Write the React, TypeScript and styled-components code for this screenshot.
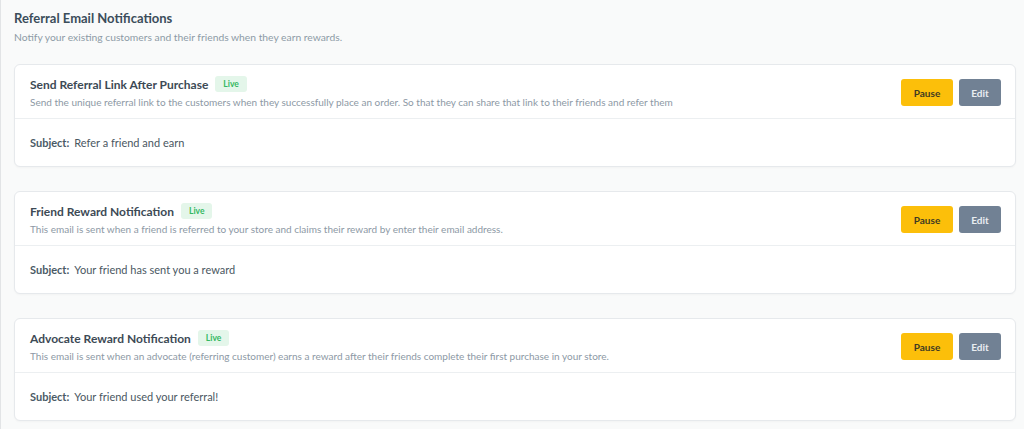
import React from "react";
import styled, { createGlobalStyle } from "styled-components";

const Global = createGlobalStyle`
  html, body { margin: 0; padding: 0; background: #f9fafa; }
  body { font-family: Lato, "Open Sans", sans-serif; }
  * { box-sizing: border-box; }
`;

const Page = styled.div`
  min-height: 429px;
  border-left: 1px solid #e2e4e6;
  padding: 9px 8px 0 13px;
  display: flex;
  flex-direction: column;
`;

const Heading = styled.h2`
  margin: 0;
  font-size: 13px;
  line-height: 18px;
  font-weight: 700;
  color: #3b4d5a;
`;

const SubHeading = styled.p`
  margin: 3px 0 0;
  font-size: 10.3px;
  line-height: 14px;
  color: #8d9aa6;
`;

const List = styled.div`
  margin-top: 20px;
  display: flex;
  flex-direction: column;
  gap: 24px;
`;

const Card = styled.section`
  background: #fff;
  border: 1px solid #e6e9ec;
  border-radius: 6px;
  box-shadow: 0 1px 2px rgba(0, 0, 0, 0.03);
`;

const CardHeader = styled.div`
  display: flex;
  align-items: center;
  justify-content: space-between;
  padding: 11px 14px 9px 15px;
  border-bottom: 1px solid #eceff1;
`;

const HeaderText = styled.div`
  display: flex;
  flex-direction: column;
  gap: 3px;
`;

const TitleRow = styled.div`
  display: flex;
  align-items: center;
  gap: 7px;
  height: 16px;
`;

const Title = styled.h3`
  margin: 0;
  font-size: 12px;
  font-weight: 700;
  color: #3d4a55;
`;

const Badge = styled.span`
  display: inline-flex;
  align-items: center;
  justify-content: center;
  height: 16px;
  padding: 0 8px;
  border-radius: 3px;
  background: #e4f6ea;
  color: #34b862;
  font-size: 8.5px;
  font-weight: 700;
`;

const Description = styled.p`
  margin: 0;
  font-size: 10px;
  line-height: 14px;
  color: #8d99a5;
`;

const Actions = styled.div`
  display: flex;
  gap: 6px;
`;

const Button = styled.button<{ $variant: "warning" | "muted" }>`
  height: 27px;
  border: none;
  border-radius: 3px;
  padding: 0 ${(p) => (p.$variant === "warning" ? "12px" : "11px")};
  min-width: ${(p) => (p.$variant === "warning" ? "52px" : "42px")};
  font-family: Lato, sans-serif;
  font-size: 10px;
  font-weight: 700;
  cursor: pointer;
  background: ${(p) => (p.$variant === "warning" ? "#fcbf0a" : "#718194")};
  color: ${(p) => (p.$variant === "warning" ? "#3f3a22" : "#e9edf1")};
`;

const CardBody = styled.div`
  height: 47px;
  padding: 0 15px;
  display: flex;
  align-items: center;
  font-size: 11px;
  color: #4a5762;
`;

const Label = styled.strong`
  font-weight: 700;
  color: #4a5a66;
  margin-right: 5px;
`;

const items = [
  {
    title: "Send Referral Link After Purchase",
    desc: "Send the unique referral link to the customers when they successfully place an order. So that they can share that link to their friends and refer them",
    subject: "Refer a friend and earn",
  },
  {
    title: "Friend Reward Notification",
    desc: "This email is sent when a friend is referred to your store and claims their reward by enter their email address.",
    subject: "Your friend has sent you a reward",
  },
  {
    title: "Advocate Reward Notification",
    desc: "This email is sent when an advocate (referring customer) earns a reward after their friends complete their first purchase in your store.",
    subject: "Your friend used your referral!",
  },
];

export default function App() {
  return (
    <>
      <Global />
      <Page>
        <Heading>Referral Email Notifications</Heading>
        <SubHeading>Notify your existing customers and their friends when they earn rewards.</SubHeading>
        <List>
          {items.map((it) => (
            <Card key={it.title}>
              <CardHeader>
                <HeaderText>
                  <TitleRow>
                    <Title>{it.title}</Title>
                    <Badge>Live</Badge>
                  </TitleRow>
                  <Description>{it.desc}</Description>
                </HeaderText>
                <Actions>
                  <Button $variant="warning">Pause</Button>
                  <Button $variant="muted">Edit</Button>
                </Actions>
              </CardHeader>
              <CardBody>
                <Label>Subject:</Label>
                {it.subject}
              </CardBody>
            </Card>
          ))}
        </List>
      </Page>
    </>
  );
}
